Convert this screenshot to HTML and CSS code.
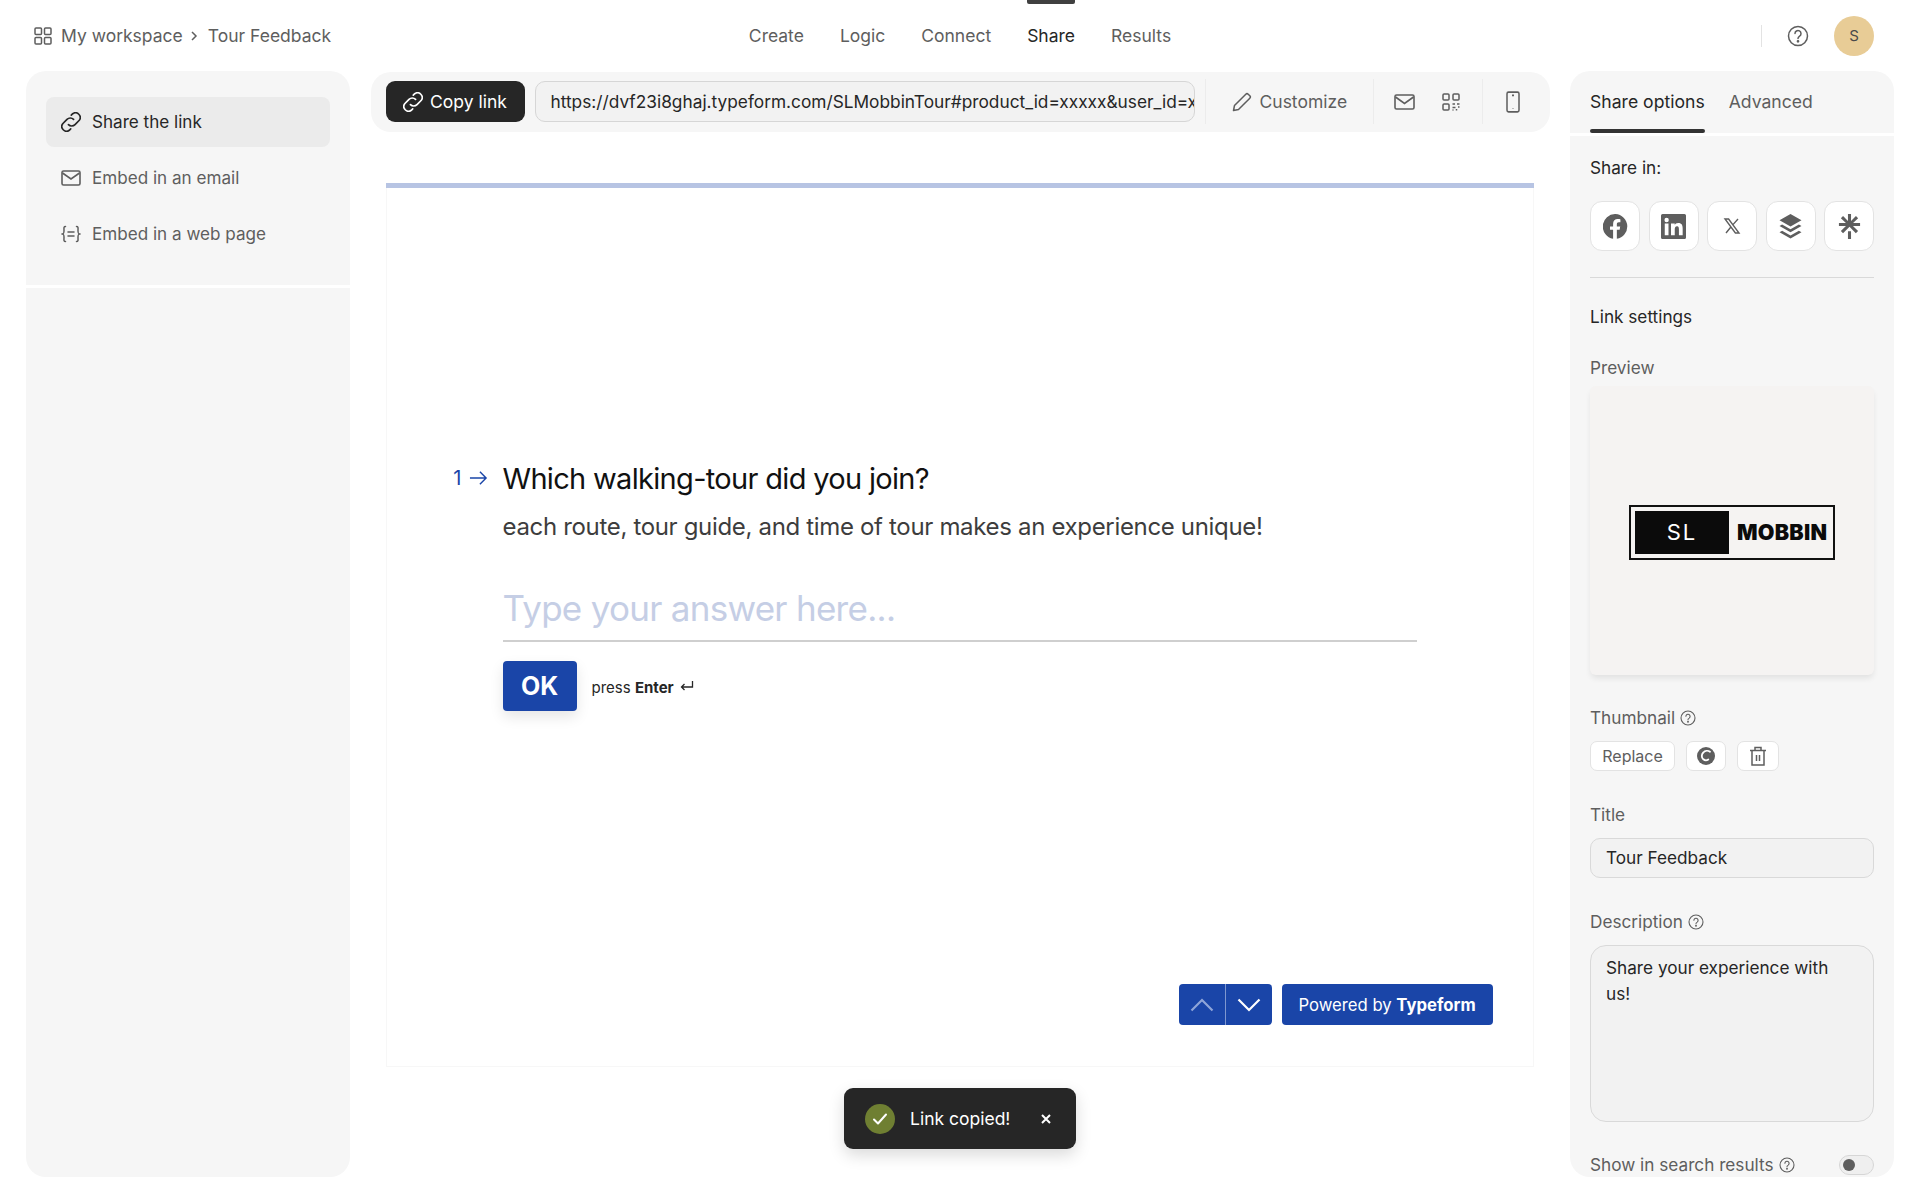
FILE: index.html
```html
<!DOCTYPE html>
<html lang="en">
<head>
<meta charset="utf-8">
<title>Tour Feedback - Share</title>
<link rel="stylesheet" href="styles.css">
</head>
<body>
<div class="app">
  <header class="topbar">
    <div class="crumbs">
      <svg class="ico-18" viewBox="0 0 18 18" fill="none" stroke="currentColor" stroke-width="1.5"><rect x="1" y="1" width="6.5" height="6.5" rx="1"/><rect x="10.5" y="1" width="6.5" height="6.5" rx="1"/><rect x="1" y="10.5" width="6.5" height="6.5" rx="1"/><rect x="10.5" y="10.5" width="6.5" height="6.5" rx="1"/></svg>
      <span class="crumb-first">My workspace</span>
      <svg class="chev" viewBox="0 0 8 12" fill="none" stroke="currentColor" stroke-width="1.5"><path d="M2 2l4 4-4 4"/></svg>
      <span>Tour Feedback</span>
    </div>
    <nav class="tabs">
      <a>Create</a><a>Logic</a><a>Connect</a><a class="on">Share</a><a>Results</a>
    </nav>
    <div class="account">
      <span class="vsep"></span>
      <svg class="help" viewBox="0 0 22 22" fill="none" stroke="currentColor" stroke-width="1.5"><circle cx="11" cy="11" r="9.5"/><path d="M8 8.6a3 3 0 1 1 4.6 2.5c-1 .7-1.6 1.2-1.6 2.4" stroke-linecap="round"/><circle cx="11" cy="16.3" r=".6" fill="currentColor"/></svg>
      <span class="avatar">S</span>
    </div>
  </header>

  <main class="workspace">
    <aside class="panel side">
      <div class="side-list">
        <a class="side-item active">
          <svg class="ico-20" viewBox="3 3 14 14" fill="none" stroke="currentColor" stroke-width="1.15" stroke-linecap="round"><path d="M8.2 11.8a3.2 3.2 0 0 0 4.6 0l3-3a3.3 3.3 0 0 0-4.6-4.6l-1 1"/><path d="M11.8 8.2a3.2 3.2 0 0 0-4.6 0l-3 3a3.3 3.3 0 0 0 4.6 4.6l1-1"/></svg>
          Share the link
        </a>
        <a class="side-item">
          <svg class="ico-20" viewBox="0 0 20 20" fill="none" stroke="currentColor" stroke-width="1.6"><rect x="1" y="3" width="18" height="14" rx="1.5"/><path d="M1.5 5L10 11l8.5-6"/></svg>
          Embed in an email
        </a>
        <a class="side-item">
          <svg class="ico-20" viewBox="0 0 20 20" fill="none" stroke="currentColor" stroke-width="1.5" stroke-linecap="round"><path d="M4.5 2.5C2.5 2.5 3 4 3 6.500S3 9.500 1.500 10C3 10.500 3 11 3 13.500s-.5 4 1.500 4"/><path d="M15.500 2.500c2 0 1.500 1.500 1.500 4s0 3 1.500 3.500c-1.500.5-1.500 1-1.500 3.500s.5 4-1.500 4"/><path d="M7 8h6M7 12h6"/></svg>
          Embed in a web page
        </a>
      </div>
      <div class="side-rest"></div>
    </aside>

    <section class="center">
      <div class="toolbar">
        <button class="copy">
          <svg class="ico-20" viewBox="3 3 14 14" fill="none" stroke="currentColor" stroke-width="1.15" stroke-linecap="round"><path d="M8.2 11.8a3.2 3.2 0 0 0 4.6 0l3-3a3.3 3.3 0 0 0-4.600-4.600l-1 1"/><path d="M11.800 8.200a3.200 3.200 0 0 0-4.600 0l-3 3a3.300 3.300 0 0 0 4.600 4.600l1-1"/></svg>
          Copy link
        </button>
        <div class="url"><span>https://dvf23i8ghaj.typeform.com/SLMobbinTour#product_id=xxxxx&amp;user_id=xxxxx</span></div>
        <span class="tsep sep-a"></span>
        <a class="customize">
          <svg class="ico-20" viewBox="0 0 20 20" fill="none" stroke="currentColor" stroke-width="1.5" stroke-linejoin="round"><path d="M1.500 18.500l1-5L13.800 2.200a1.700 1.700 0 0 1 2.400 0l1.600 1.600a1.700 1.700 0 0 1 0 2.400L6.500 17.500z"/></svg>
          Customize
        </a>
        <span class="tsep sep-b"></span>
        <svg class="mail" viewBox="0 0 21 16" fill="none" stroke="currentColor" stroke-width="1.6"><rect x="1" y="1" width="19" height="14" rx="1.500"/><path d="M1.500 3L10.500 9.500 19.500 3"/></svg>
        <svg class="qr" viewBox="0 0 18 18" fill="none" stroke="currentColor" stroke-width="1.500"><rect x="1" y="1" width="6" height="6" rx="1"/><rect x="11" y="1" width="6" height="6" rx="1"/><rect x="1" y="11" width="6" height="6" rx="1"/><path d="M10.500 11h2.500M15 11h2.500M10.500 14.500h3M16 14h1.500M11 17.500v-1M14.500 17.500v-1.500"/></svg>
        <span class="tsep sep-c"></span>
        <svg class="phone" viewBox="0 0 14 20" fill="none" stroke="currentColor" stroke-width="1.500"><rect x="1" y="1" width="12" height="18" rx="1.500"/><path d="M6 4h2M7 15.500v.5"/></svg>
      </div>

      <div class="form-card">
        <div class="progress"></div>
        <div class="question">
          <div class="q-title">
            <span class="q-num">1<svg viewBox="0 0 20 16" fill="none" stroke="currentColor" stroke-width="1.500"><path d="M1 8h17M11.500 1.500L18 8l-6.500 6.500"/></svg></span>
            <h1>Which walking-tour did you join?</h1>
          </div>
          <p class="q-sub">each route, tour guide, and time of tour makes an experience unique!</p>
          <div class="answer">Type your answer here...</div>
          <div class="ok-row">
            <span class="ok">OK</span>
            <span class="hint"><span>press <b>Enter</b></span>
              <svg viewBox="0 0 14 12" fill="none" stroke="currentColor" stroke-width="1.300"><path d="M12.500 1v6h-11M4.500 4L1.500 7l3 3"/></svg>
            </span>
          </div>
        </div>
        <div class="form-foot">
          <div class="arrows">
            <span class="arrow dim"><svg viewBox="0 0 24 14" fill="none" stroke="currentColor" stroke-width="2.200"><path d="M1.500 12.500L12 2l10.500 10.500"/></svg></span>
            <span class="arrow"><svg viewBox="0 0 24 14" fill="none" stroke="currentColor" stroke-width="2.200"><path d="M1.500 1.500L12 12 22.500 1.500"/></svg></span>
          </div>
          <span class="powered"><span>Powered by <b>Typeform</b></span></span>
        </div>
      </div>
    </section>

    <aside class="panel options">
      <div class="opt-tabs">
        <a class="opt-tab on">Share options</a>
        <a class="opt-tab">Advanced</a>
      </div>
      <div class="opt-body">
        <div class="share-in">Share in:</div>
        <div class="socials">
          <span class="social"><svg viewBox="0 0 26 26"><path fill="#5e5e5e" d="M13 0a13 13 0 0 0-2.500 25.800V16.500H7.300V13h3.200v-2.700c0-3.200 1.900-5 4.800-5 1.400 0 2.800.3 2.800.3v3.100h-1.600c-1.600 0-2.100 1-2.100 2V13h3.500l-.6 3.500h-2.900v9.300A13 13 0 0 0 13 0z"/></svg></span>
          <span class="social"><svg viewBox="0 0 24 24"><path fill="#5e5e5e" fill-rule="evenodd" d="M1.500 0h21A1.500 1.500 0 0 1 24 1.500v21a1.500 1.500 0 0 1-1.500 1.500h-21A1.500 1.500 0 0 1 0 22.500v-21A1.500 1.500 0 0 1 1.500 0zM3.600 9v11.400h3.600V9zM5.400 3.600a2.100 2.100 0 1 0 0 4.200 2.100 2.100 0 0 0 0-4.200zM9.600 9v11.400h3.600v-5.700c0-1.500.5-2.900 2.200-2.900s1.800 1.500 1.800 3v5.600h3.600v-6.300c0-3.100-.7-5.400-4.300-5.400-1.700 0-2.900.9-3.300 1.800V9z"/></svg></span>
          <span class="social x"><svg viewBox="0 0 18 18" fill="none" stroke="#5e5e5e" stroke-width="1.400"><path d="M2 2h3.600l10.400 14h-3.600zM15 2L10.200 7.400M7.700 10.200L3 16"/></svg></span>
          <span class="social"><svg viewBox="0 0 22 25" class="buffer"><path fill="#5e5e5e" d="M11 0l11 6.200-11 6.200L0 6.200zM0 12l2.600-1.500L11 15.300l8.400-4.800L22 12l-11 6.300zM0 18.200l2.600-1.500 8.400 4.800 8.400-4.800 2.600 1.500L11 24.500z"/></svg></span>
          <span class="social"><svg viewBox="0 0 24 26"><path fill="#5e5e5e" d="M10.400 0h3.200v7.200l5.100-5.200 2.300 2.300-5.300 5.100H23v3.200h-7.400l5.300 5.100-2.300 2.200L12 13.200 5.300 19.900 3 17.700l5.300-5.100H1V9.400h7.300L3 4.300 5.300 2l5.100 5.200zM10.400 18h3.200v8h-3.200z"/></svg></span>
        </div>
        <div class="divider"></div>
        <div class="link-settings">Link settings</div>
        <div class="label preview-label">Preview</div>
        <div class="preview">
          <div class="logo">
            <span class="logo-sl">SL</span>
            <span class="logo-mob">MOBBIN</span>
          </div>
        </div>
        <div class="label thumb-label">Thumbnail <svg class="q" viewBox="0 0 16 16" fill="none" stroke="currentColor" stroke-width="1.100"><circle cx="8" cy="8" r="7"/><path d="M5.900 6.300a2.100 2.100 0 1 1 3.300 1.800c-.8.500-1.200.9-1.200 1.700" stroke-linecap="round"/><circle cx="8" cy="11.800" r=".4"/></svg></div>
        <div class="thumb-actions">
          <span class="mini replace">Replace</span>
          <span class="mini refresh"><svg viewBox="0 0 18 18"><circle cx="9" cy="9" r="9" fill="#5e5e5e"/><path fill="none" stroke="#fff" stroke-width="1.800" stroke-linecap="round" d="M13 4.800A5 5 0 0 0 6.300 5.500c-2 2-2 5 0 6.800 1.500 1.200 3.500 1.200 5 .2"/></svg></span>
          <span class="mini trash"><svg viewBox="0 0 18 20" fill="none" stroke="#5e5e5e" stroke-width="1.500"><path d="M1 4.500h16M6 4.500V1.500h6v3M3 4.500V19h12V4.500M7.500 9v6M10.500 9v6"/></svg></span>
        </div>
        <div class="label title-label">Title</div>
        <div class="field">Tour Feedback</div>
        <div class="label desc-label">Description <svg class="q" viewBox="0 0 16 16" fill="none" stroke="currentColor" stroke-width="1.100"><circle cx="8" cy="8" r="7"/><path d="M5.900 6.300a2.100 2.100 0 1 1 3.300 1.800c-.8.500-1.200.9-1.200 1.700" stroke-linecap="round"/><circle cx="8" cy="11.800" r=".4"/></svg></div>
        <div class="area">Share your experience with us!</div>
        <div class="search-row">
          <span class="label">Show in search results <svg class="q" viewBox="0 0 16 16" fill="none" stroke="currentColor" stroke-width="1.100"><circle cx="8" cy="8" r="7"/><path d="M5.900 6.300a2.100 2.100 0 1 1 3.300 1.800c-.8.500-1.200.9-1.200 1.700" stroke-linecap="round"/><circle cx="8" cy="11.800" r=".4"/></svg></span>
          <span class="toggle"><i></i></span>
        </div>
      </div>
    </aside>
  </main>

  <div class="toast">
    <span class="tick"><svg viewBox="0 0 16 14" fill="none" stroke="#fff" stroke-width="2" stroke-linecap="round" stroke-linejoin="round"><path d="M2 7.500l4 4L14 2.500"/></svg></span>
    <span class="toast-text">Link copied!</span>
    <svg class="toast-x" viewBox="0 0 10 10" fill="none" stroke="#fff" stroke-width="2"><path d="M1 1l8 8M9 1l-8 8"/></svg>
  </div>
</div>
</body>
</html>
```

FILE: styles.css
```css
* { box-sizing: border-box; }
html, body { margin: 0; height: 100%; background: #fff; }
body { font-family: Inter, "Noto Sans", sans-serif; font-size: 17.5px; color: #5e5e5e; overflow: hidden; }
.app { position: relative; width: 1920px; height: 1200px; overflow: hidden; display: flex; flex-direction: column; }
svg { display: block; flex: none; }

/* top bar */
.topbar { height: 71px; flex: none; display: grid; grid-template-columns: 1fr auto 1fr; align-items: center; padding: 0 46px 0 34px; }
.crumbs { display: flex; align-items: center; }
.ico-18 { width: 18px; height: 18px; margin-right: 9px; }
.chev { width: 8px; height: 12px; margin: 0 10px 0 7px; }
.tabs { display: flex; gap: 36px; height: 71px; align-items: center; margin-left: 12px; }
.tabs a { position: relative; line-height: 71px; }
.tabs a.on { color: #262626; }
.tabs a.on::before { content: ""; position: absolute; left: 0; right: 0; top: 0; height: 4px; background: #404040; border-radius: 0 0 2px 2px; }
.account { display: flex; align-items: center; justify-content: flex-end; }
.vsep { width: 1px; height: 22px; background: #e3e3e3; margin-right: 25px; }
.help { width: 22px; height: 22px; margin-right: 25px; }
.avatar { width: 40px; height: 40px; border-radius: 50%; background: #e8cc96; color: #4a4a4a; display: flex; align-items: center; justify-content: center; font-size: 15px; }

/* workspace */
.workspace { flex: 1; min-height: 0; display: grid; grid-template-columns: 324px 1fr 324px; column-gap: 20.5px; padding: 0 26px 23px; }
.panel { background: #f6f6f6; border-radius: 20px; overflow: hidden; }

/* left */
.side { display: flex; flex-direction: column; background: transparent; font-size: 17.1px; }
.side-list { background: #f6f6f6; padding: 26px 20px 0; height: 214px; }
.side-rest { flex: 1; background: #f6f6f6; margin-top: 3px; }
.side-item { display: flex; align-items: center; gap: 11px; height: 50px; margin-bottom: 6px; padding: 0 15px 1px; border-radius: 8px; }
.side-item.active { background: #ebebeb; color: #262626; }
.ico-20 { width: 20px; height: 20px; }

/* center */
.center { display: flex; flex-direction: column; min-width: 0; }
.toolbar { height: 60px; margin-top: 1px; padding: 0 0 1px 15px; background: #f6f6f6; border-radius: 20px; display: flex; align-items: center; }
.copy { height: 41px; width: 139px; border: 0; background: #262626; color: #fff; border-radius: 9px; font: inherit; display: flex; align-items: center; justify-content: center; gap: 7px; }
.url { width: 660px; height: 41px; margin-left: 10px; background: #f2f2f2; border: 1px solid #d6d6d6; border-radius: 10px; padding-left: 15px; color: #262626; overflow: hidden; white-space: nowrap; line-height: 39px; font-size: 17.3px; }
.url span { display: block; overflow: hidden; }
.tsep { width: 1px; height: 45px; background: #ececec; flex: none; }
.sep-a { margin-left: 10px; }
.customize { display: flex; align-items: center; gap: 8px; margin-left: 26px; }
.sep-b { margin-left: 26px; }
.mail { width: 21px; height: 16px; margin-left: 20px; }
.qr { width: 18px; height: 18px; margin-left: 27px; }
.sep-c { margin-left: 22px; }
.phone { width: 14px; height: 20px; margin-left: 23px; transform: scale(1, 1.100); }

.form-card { margin: 51px 16px 0 15px; height: 884px; display: flex; flex-direction: column; background: #fff; border: 1px solid #f7f7f7; border-top: 0; position: relative; }
.progress { height: 5px; flex: none; margin: 0 -1px; background: #b7c4e3; }
.question { padding: 0 0 0 116px; margin-top: 273px; }
.q-title { display: flex; align-items: center; position: relative; }
.q-num { position: absolute; right: 100%; margin-right: 15px; top: 7px; display: flex; align-items: center; gap: 7px; color: #1a45a8; font-size: 20px; line-height: 20px; }
.q-num svg { width: 19px; height: 16px; }
h1 { margin: 0; font-size: 29px; font-weight: 400; line-height: 36px; color: #111; letter-spacing: -0.68px; }
.q-sub { margin: 12px 0 0; font-size: 24px; line-height: 36px; color: #3d3d3d; letter-spacing: -0.33px; }
.answer { width: 914px; height: 66px; margin-top: 31px; border-bottom: 2px solid #cfcfcf; font-size: 35px; line-height: 64px; color: #c5cee5; letter-spacing: -0.72px; }
.ok-row { display: flex; align-items: center; margin-top: 19px; }
.ok { width: 74px; height: 50px; border-radius: 4px; background: #1a45a8; color: #fff; font-size: 25px; font-weight: 700; display: flex; align-items: center; justify-content: center; box-shadow: 0 6px 14px rgba(0,0,0,.1); }
.hint { display: flex; align-items: center; gap: 5px; margin-left: 15px; margin-top: 3px; font-size: 15px; color: #262626; }
.hint svg { width: 14px; height: 12px; margin-left: 1px; margin-top: -3px; }
.form-foot { position: absolute; right: 40px; bottom: 41px; display: flex; gap: 10px; }
.arrows { display: flex; width: 93px; height: 41px; background: #1a45a8; border-radius: 4px; overflow: hidden; }
.arrow { flex: 1; color: #fff; display: flex; align-items: center; justify-content: center; }
.arrow.dim { color: #8fa5d8; border-right: 1px solid #7f97cf; }
.arrow svg { width: 24px; height: 14px; }
.powered { width: 211px; height: 41px; background: #1a45a8; color: #fff; border-radius: 4px; display: flex; align-items: center; justify-content: center; font-size: 16.7px; }

/* right */
.options { display: flex; flex-direction: column; background: transparent; font-size: 17.2px; }
.opt-tabs { height: 62px; background: #f6f6f6; display: flex; gap: 24px; padding: 0 20px; flex: none; font-size: 17.6px; }
.opt-tab { line-height: 62px; position: relative; height: 62px; }
.opt-tab.on { color: #262626; }
.opt-tab.on::after { content: ""; position: absolute; left: 0; right: 0; bottom: 0; height: 4px; background: #333; border-radius: 2px; }
.opt-body { flex: 1; background: #f6f6f6; margin-top: 3px; padding: 0 20px; min-height: 0; }
.share-in { color: #262626; line-height: 24px; padding-top: 20px; height: 44px; }
.socials { display: flex; justify-content: space-between; margin-top: 21px; }
.social { width: 50px; height: 50px; background: #fff; border: 1px solid #e3e3e3; border-radius: 12px; display: flex; align-items: center; justify-content: center; }
.social svg { width: 25px; height: 25px; }
.social.x svg { width: 18px; height: 18px; }
.divider { height: 1px; background: #d9d9d9; margin-top: 26px; }
.link-settings { color: #262626; line-height: 24px; margin-top: 27px; }
.label { display: flex; align-items: center; gap: 5px; line-height: 24px; }
.preview-label { margin-top: 27px; }
.preview { height: 289px; margin-top: 6px; background: #f5f3f2; border-radius: 6px; box-shadow: 0 4px 6px -1px rgba(0,0,0,.09); display: flex; align-items: center; justify-content: center; }
.logo { width: 206px; height: 55px; border: 2px solid #111; padding: 4px; display: flex; align-items: stretch; margin-top: 3px; }
.logo-sl { width: 94px; background: #0b0b0b; color: #fff; font-size: 22px; letter-spacing: 2px; display: flex; align-items: center; justify-content: center; }
.logo-mob { flex: 1; color: #0b0b0b; font-weight: 900; font-size: 21.5px; line-height: 43px; padding-left: 8px; letter-spacing: .25px; }
.q { width: 16px; height: 16px; }
.thumb-label { margin-top: 31px; }
.thumb-actions { display: flex; margin-top: 11px; }
.mini { height: 30px; background: #fff; border: 1px solid #e3e3e3; border-radius: 7px; display: flex; align-items: center; justify-content: center; font-size: 16px; }
.replace { width: 85px; }
.refresh { width: 40px; margin-left: 11px; }
.refresh svg { width: 18px; height: 18px; }
.trash { width: 42px; margin-left: 11px; }
.trash svg { width: 18px; height: 20px; }
.title-label { margin-top: 32px; }
.field { height: 40px; margin-top: 11px; background: #f2f2f2; border: 1px solid #d9d9d9; border-radius: 10px; padding-left: 15px; color: #262626; line-height: 38px; }
.desc-label { margin-top: 32px; }
.area { height: 177px; margin-top: 11px; background: #f2f2f2; border: 1px solid #d9d9d9; border-radius: 16px; padding: 9px 36px 0 15px; color: #262626; line-height: 26px; }
.search-row { display: flex; justify-content: space-between; align-items: center; margin-top: 31px; }
.toggle { width: 35px; height: 20px; border-radius: 10px; background: #efefef; border: 1px solid #d6d6d6; display: flex; align-items: center; padding-left: 3px; }
.toggle i { width: 12px; height: 12px; border-radius: 50%; background: #5e5e5e; }

/* toast */
.toast { position: absolute; left: 844px; top: 1088px; width: 232px; height: 61px; background: #262626; border-radius: 9px; box-shadow: 0 6px 16px rgba(0,0,0,.15); display: flex; align-items: center; padding-left: 21px; }
.tick { width: 30px; height: 30px; border-radius: 50%; background: #6f7f32; display: flex; align-items: center; justify-content: center; }
.tick svg { width: 16px; height: 14px; }
.toast-text { color: #fff; margin-left: 15px; }
.toast-x { width: 10px; height: 10px; margin-left: 31px; }
```
